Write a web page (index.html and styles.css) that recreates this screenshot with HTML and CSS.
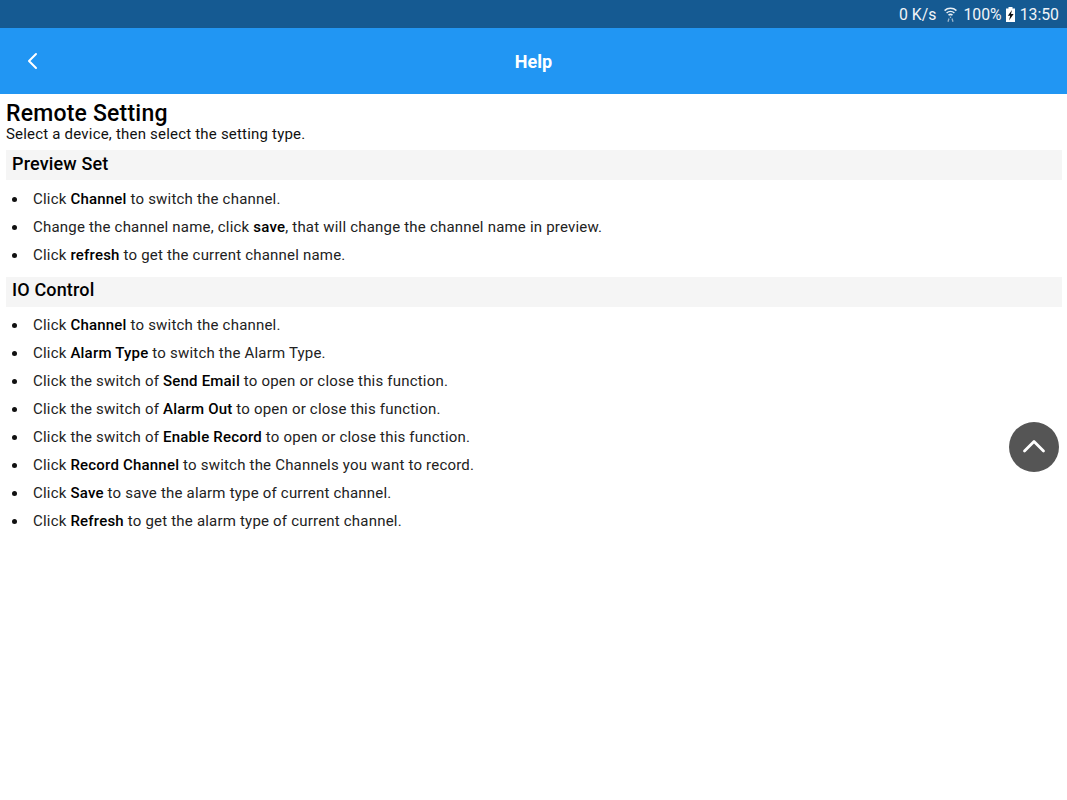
FILE: index.html
```html
<!DOCTYPE html>
<html lang="en">
<head>
<meta charset="utf-8">
<title>Help</title>
<link rel="stylesheet" href="styles.css">
</head>
<body>
<div class="status">
  <span>0 K/s</span>
  <svg class="wifi" width="13" height="15" viewBox="0 0 13 15" fill="none" stroke="#e8eff5" stroke-width="1.5"><path d="M.6 3.600C3.800.6 9.200.6 12.400 3.600M2.600 6C4.800 4.100 8.200 4.100 10.400 6M4.500 8.200C5.600 7.300 7.400 7.300 8.500 8.200"/><path d="M6.500 9.500V11M5 11.500 4 14.800M8 11.500l1 3.300" stroke="#9db6cc" stroke-width="1.300"/></svg>
  <span class="pct">100%</span>
  <svg class="batt" width="9" height="15" viewBox="0 0 9 15"><path fill="#fff" d="M2.500 0h4v1.500H9V15H0V1.500h2.500z"/><path fill="#0c0e10" d="M6 3 1.800 8.800h2.400L3 13.500 7.600 7H5z"/></svg>
  <span class="time">13:50</span>
</div>
<header class="bar">
  <svg class="back" width="12" height="18" viewBox="0 0 12 18" fill="none" stroke="#fff" stroke-width="2" stroke-linecap="round" stroke-linejoin="round"><path d="M10 2 3 9l7 7"/></svg>
  <h1 class="bar-title">Help</h1>
</header>
<main class="content">
  <h2 class="title">Remote Setting</h2>
  <p class="intro">Select a device, then select the setting type.</p>
  <h3 class="section">Preview Set</h3>
  <ul class="list">
    <li>Click <b>Channel</b> to switch the channel.</li>
    <li>Change the channel name, click <b>save</b>, that will change the channel name in preview.</li>
    <li>Click <b>refresh</b> to get the current channel name.</li>
  </ul>
  <h3 class="section">IO Control</h3>
  <ul class="list">
    <li>Click <b>Channel</b> to switch the channel.</li>
    <li>Click <b>Alarm Type</b> to switch the Alarm Type.</li>
    <li>Click the switch of <b>Send Email</b> to open or close this function.</li>
    <li>Click the switch of <b>Alarm Out</b> to open or close this function.</li>
    <li>Click the switch of <b>Enable Record</b> to open or close this function.</li>
    <li>Click <b>Record Channel</b> to switch the Channels you want to record.</li>
    <li>Click <b>Save</b> to save the alarm type of current channel.</li>
    <li>Click <b>Refresh</b> to get the alarm type of current channel.</li>
  </ul>
</main>
<button class="top" aria-label="Back to top">
  <svg class="top-icon" width="24" height="14" viewBox="0 0 24 14" fill="none" stroke="#fff" stroke-width="2.800" stroke-linecap="round" stroke-linejoin="round"><path d="M2.500 12 12 2.500l9.500 9.500"/></svg>
</button>
</body>
</html>
```
FILE: styles.css
```css
* { box-sizing: border-box; }
html, body { margin: 0; padding: 0; }
body {
  width: 1067px;
  height: 800px;
  overflow: hidden;
  background: #fff;
  color: #000;
  font-family: Roboto, "Noto Sans", sans-serif;
  position: relative;
}
.status {
  height: 28px;
  background: #155a92;
  display: flex;
  align-items: center;
  justify-content: flex-end;
  padding-right: 8px;
  font-size: 15.800px;
  color: #f0f4f8;
}
.wifi { margin-left: 8px; }
.pct { margin-left: 6px; }
.batt { margin-left: 4px; }
.time { margin-left: 5px; }
.bar {
  height: 66px;
  background: #2196f3;
  display: flex;
  align-items: center;
  justify-content: center;
  position: relative;
}
.back { position: absolute; left: 26px; top: 24px; }
.bar-title {
  margin: 0;
  font-size: 18px;
  font-weight: 700;
  color: #fff;
}
.content { padding: 7px 5px 0 6px; }
.title {
  margin: 0;
  font-size: 23px;
  line-height: 25px;
  letter-spacing: 0.2px;
  font-weight: 500;
}
.intro {
  margin: 0;
  font-size: 15px;
  line-height: 16px;
  letter-spacing: 0.2px;
  color: #111;
}
.section {
  margin: 8px 0 0;
  height: 30px;
  padding: 0 6px;
  background: #f5f5f5;
  font-size: 18px;
  line-height: 27px;
  letter-spacing: 0.15px;
  font-weight: 500;
}
.list + .section { line-height: 26.500px; }
.list {
  margin: 0;
  padding: 4.500px 0 0 27px;
  list-style: none;
  font-size: 15px;
  line-height: 28px;
  letter-spacing: 0.2px;
  color: #222;
}
.list li { position: relative; }
.list li::before {
  content: "";
  position: absolute;
  left: -21px;
  top: 12px;
  width: 5px;
  height: 5px;
  border-radius: 50%;
  background: #111;
}
.list b { font-weight: 500; color: #000; }
.top {
  position: absolute;
  left: 1009px;
  top: 422px;
  width: 50px;
  height: 50px;
  border: 0;
  padding: 0;
  border-radius: 50%;
  background: #555;
  display: flex;
  align-items: center;
  justify-content: center;
}
.top-icon { margin-bottom: 3px; }
```
